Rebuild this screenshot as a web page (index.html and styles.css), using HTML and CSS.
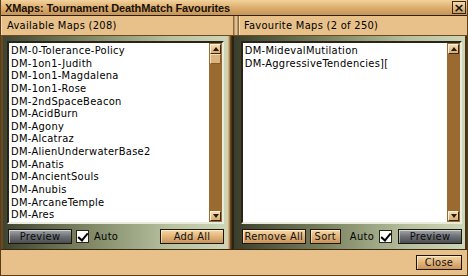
FILE: index.html
```html
<!DOCTYPE html>
<html>
<head>
<meta charset="utf-8">
<link rel="stylesheet" href="styles.css">
</head>
<body>
<div class="window">
  <div class="titlebar">
    <span class="title">XMaps: Tournament DeathMatch Favourites</span>
    <span class="closebox">×</span>
  </div>
  <div class="headers">
    <div class="hdr hdr-left">Available Maps (208)</div>
    <div class="hdr-sep"></div>
    <div class="hdr hdr-right">Favourite Maps (2 of 250)</div>
  </div>
  <div class="panels">
    <div class="panel panel-left">
      <div class="listbox">
        <ul class="list">
          <li>DM-0-Tolerance-Policy</li>
          <li>DM-1on1-Judith</li>
          <li>DM-1on1-Magdalena</li>
          <li>DM-1on1-Rose</li>
          <li>DM-2ndSpaceBeacon</li>
          <li>DM-AcidBurn</li>
          <li>DM-Agony</li>
          <li>DM-Alcatraz</li>
          <li>DM-AlienUnderwaterBase2</li>
          <li>DM-Anatis</li>
          <li>DM-AncientSouls</li>
          <li>DM-Anubis</li>
          <li>DM-ArcaneTemple</li>
          <li>DM-Ares</li>
        </ul>
        <div class="scrollbar">
          <div class="sb-btn sb-up"></div>
          <div class="sb-thumb"></div>
          <div class="sb-track"></div>
          <div class="sb-btn sb-down"></div>
        </div>
      </div>
      <div class="controls">
        <button class="btn btn-grey btn-wide">Preview</button>
        <span class="check"></span>
        <span class="lbl">Auto</span>
        <span class="spacer"></span>
        <button class="btn btn-tan btn-wide">Add All</button>
      </div>
    </div>
    <div class="sep"></div>
    <div class="panel panel-right">
      <div class="listbox">
        <ul class="list">
          <li>DM-MidevalMutilation</li>
          <li>DM-AggressiveTendencies][</li>
        </ul>
        <div class="scrollbar">
          <div class="sb-btn sb-up"></div>
          <div class="sb-track"></div>
          <div class="sb-btn sb-down"></div>
        </div>
      </div>
      <div class="controls">
        <button class="btn btn-tan btn-wide">Remove All</button>
        <button class="btn btn-tan btn-sort">Sort</button>
        <span class="spacer"></span>
        <span class="lbl">Auto</span>
        <span class="check"></span>
        <button class="btn btn-grey btn-wide btn-prev-r">Preview</button>
      </div>
    </div>
  </div>
  <div class="footer">
    <button class="btn btn-tan btn-close">Close</button>
  </div>
</div>
</body>
</html>
```
FILE: styles.css
```css
* { box-sizing: border-box; }
html, body { margin: 0; padding: 0; }
body {
  width: 468px;
  height: 276px;
  overflow: hidden;
  font-family: Tahoma, "DejaVu Sans Condensed", "Liberation Sans", sans-serif;
  font-size: 11px;
  color: #000;
}
.window {
  width: 468px;
  height: 276px;
  display: flex;
  flex-direction: column;
  background: #e8c08a;
  border-left: 1px solid #5a3c18;
  border-right: 1px solid #5a3c18;
}
.titlebar {
  height: 16px;
  display: flex;
  align-items: center;
  justify-content: space-between;
  padding: 0 1px 0 4px;
  background: linear-gradient(#f2d29c, #d8a868 60%, #c49458);
  border-bottom: 1px solid #2e1e0a;
}
.title {
  font-family: "Liberation Sans", sans-serif;
  font-weight: bold;
  font-size: 11px;
  color: #1a1008;
  letter-spacing: -0.1px;
}
.closebox {
  width: 14px;
  height: 13px;
  display: flex;
  align-items: center;
  justify-content: center;
  font-family: "DejaVu Sans", sans-serif;
  font-weight: bold;
  font-size: 13px;
  line-height: 1;
  color: #1a1008;
  background: linear-gradient(#f4dcb0, #c89c60);
  border: 1px solid #3a2810;
}
.headers {
  height: 20px;
  display: flex;
  border-bottom: 1px solid #6a4a20;
}
.hdr {
  display: flex;
  align-items: center;
  background: #e8c08a;
  border-left: 1px solid #f6dcb4;
  letter-spacing: 0.3px;
}
.hdr-left { width: 232px; padding-left: 5px; }
.hdr-sep { width: 6px; background: linear-gradient(90deg, #7a5428, #f2d6a8 50%, #7a5428); }
.hdr-right { flex: 1; padding-left: 4px; }
.panels {
  height: 213px;
  display: flex;
}
.panel {
  display: flex;
  flex-direction: column;
  padding: 5px 3px 3px 4px;
  gap: 5px;
}
.panel-left {
  width: 233px;
  background: linear-gradient(90deg, #3f4430, #7a8260 35%, #b8c2a0 75%, #ccd6b8);
  border-left: 2px solid #6a4a20;
}
.panel-right {
  flex: 1;
  background: linear-gradient(90deg, #3a3e2a, #737a58 35%, #b6c09e 75%, #ccd6b8);
  border-left: 2px solid #2c2214;
  border-right: 2px solid #4a3216;
  padding-left: 7px;
}
.sep {
  width: 5px;
  background: linear-gradient(90deg, #e8d6b0, #c8a070 40%, #6a4a20 70%, #3a2810);
}
.listbox {
  height: 183px;
  display: flex;
  border-top: 2px solid #2a2418;
  border-left: 2px solid #2a2418;
  border-bottom: 2px solid #e8ecdc;
  border-right: 2px solid #e8ecdc;
  background: #fff;
}
.list {
  flex: 1;
  margin: 0;
  padding: 1px 0 0 2px;
  list-style: none;
  overflow: hidden;
  letter-spacing: 0.3px;
}
.list li {
  height: 12.65px;
  line-height: 13px;
  white-space: nowrap;
}
.scrollbar {
  width: 13px;
  display: flex;
  flex-direction: column;
  background: #9a6a30;
  padding: 1px;
}
.sb-btn {
  height: 10px;
  position: relative;
  background: linear-gradient(#f4dcb4, #d4ac78);
  border: 1px solid #3a2810;
  border-top-color: #fff0d8;
  border-left-color: #fff0d8;
}
.sb-up::after, .sb-down::after {
  content: "";
  position: absolute;
  left: 2px;
  width: 0; height: 0;
  border-left: 3px solid transparent;
  border-right: 3px solid transparent;
}
.sb-up::after { top: 2px; border-bottom: 4px solid #2a1a08; }
.sb-down::after { top: 2px; border-top: 4px solid #2a1a08; }
.sb-thumb {
  height: 10px;
  background: #dcb480;
  border: 1px solid #f4dcb4;
  border-right-color: #8a5a24;
  border-bottom-color: #8a5a24;
}
.sb-track { flex: 1; }
.controls {
  height: 15px;
  display: flex;
  align-items: center;
  gap: 4px;
  padding-left: 1px;
}
.spacer { flex: 1; }
.btn {
  height: 15px;
  padding: 0;
  font-family: Tahoma, "DejaVu Sans Condensed", "Liberation Sans", sans-serif;
  font-size: 11px;
  letter-spacing: 0.3px;
  color: #111;
  border: 1px solid #1e1608;
  box-shadow: inset 1px 1px 0 rgba(255,255,255,0.5);
  display: flex;
  align-items: center;
  justify-content: center;
}
.btn-wide { width: 64px; }
.btn-sort { width: 31px; }
.btn-grey { background: linear-gradient(#a4a8ac, #6c7074 50%, #4a4e52); color: #0c0c0c; }
.btn-tan { background: linear-gradient(#f8d8a4, #e2b47a 50%, #c8945a); }
.btn-prev-r { margin-left: 2px; }
.check {
  width: 13px;
  height: 13px;
  background: #fff;
  border: 1px solid #2a2418;
  position: relative;
}
.check::after {
  content: "";
  position: absolute;
  left: 3px;
  top: 0px;
  width: 4px;
  height: 8px;
  border-right: 2px solid #000;
  border-bottom: 2px solid #000;
  transform: rotate(40deg);
}
.lbl { margin: 0 1px; letter-spacing: 0.3px; }
.footer {
  flex: 1;
  display: flex;
  align-items: flex-start;
  justify-content: flex-end;
  padding: 5px 5px 0 0;
  border-top: 1px solid #3a2810;
  border-bottom: 1px solid #5a3c18;
}
.btn-close { width: 46px; }
```
